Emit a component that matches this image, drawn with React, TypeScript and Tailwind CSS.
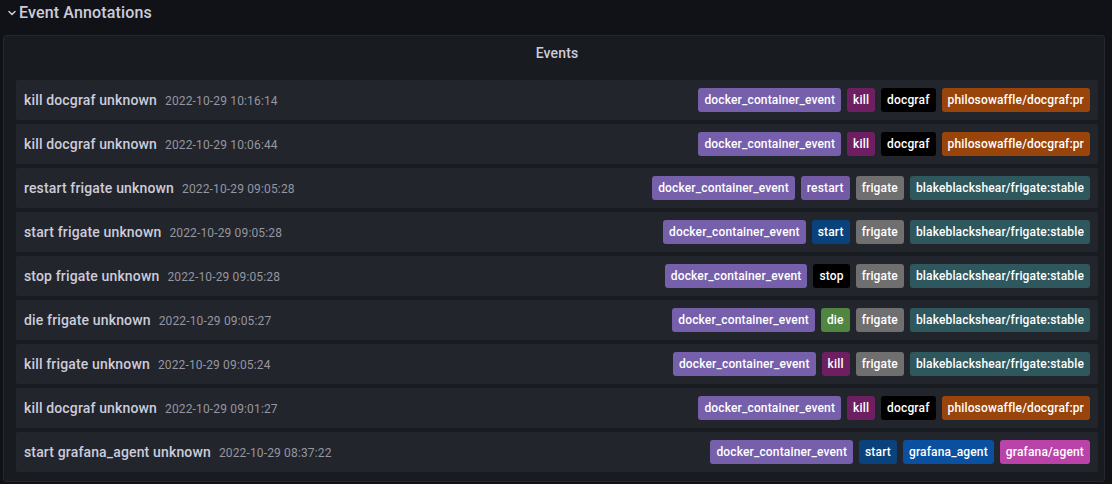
import React from 'react';
import { ChevronDown } from 'lucide-react';

type Ev = { title: string; time: string; tags: [string, string][] };

const docker: [string, string] = ['docker_container_event', 'bg-[#7660ac]'];
const docgraf: [string, string][] = [['docgraf', 'bg-[#000000]'], ['philosowaffle/docgraf:pr', 'bg-[#99440a]']];
const frigate: [string, string][] = [['frigate', 'bg-[#6f6f6f]'], ['blakeblackshear/frigate:stable', 'bg-[#2f575e]']];

const events: Ev[] = [
  { title: 'kill docgraf unknown', time: '2022-10-29 10:16:14', tags: [docker, ['kill', 'bg-[#6d1f62]'], ...docgraf] },
  { title: 'kill docgraf unknown', time: '2022-10-29 10:06:44', tags: [docker, ['kill', 'bg-[#6d1f62]'], ...docgraf] },
  { title: 'restart frigate unknown', time: '2022-10-29 09:05:28', tags: [docker, ['restart', 'bg-[#735aa5]'], ...frigate] },
  { title: 'start frigate unknown', time: '2022-10-29 09:05:28', tags: [docker, ['start', 'bg-[#0a437c]'], ...frigate] },
  { title: 'stop frigate unknown', time: '2022-10-29 09:05:28', tags: [docker, ['stop', 'bg-[#000000]'], ...frigate] },
  { title: 'die frigate unknown', time: '2022-10-29 09:05:27', tags: [docker, ['die', 'bg-[#508642]'], ...frigate] },
  { title: 'kill frigate unknown', time: '2022-10-29 09:05:24', tags: [docker, ['kill', 'bg-[#6d1f62]'], ...frigate] },
  { title: 'kill docgraf unknown', time: '2022-10-29 09:01:27', tags: [docker, ['kill', 'bg-[#6d1f62]'], ...docgraf] },
  {
    title: 'start grafana_agent unknown',
    time: '2022-10-29 08:37:22',
    tags: [docker, ['start', 'bg-[#0a437c]'], ['grafana_agent', 'bg-[#0a50a1]'], ['grafana/agent', 'bg-[#ba43a9]']],
  },
];

const App: React.FC = () => {
  return (
    <div className="w-[1112px] h-[484px] bg-[#111217] text-[#ccccdc] overflow-hidden tracking-[0.15px]" style={{ fontFamily: 'Roboto, "Noto Sans", sans-serif' }}>
      {/* Row header */}
      <div className="flex items-center h-[25px] pl-[6px] pt-[1px]">
        <ChevronDown className="w-[12px] h-[12px] mr-[1px]" strokeWidth={3} />
        <span className="text-base font-medium">Event Annotations</span>
      </div>

      {/* Panel */}
      <div className="mt-[10px] ml-[3px] w-[1102px] h-[447px] bg-[#181b1f] border border-[#25272c] rounded-[3px] flex flex-col">
        <div className="h-[32px] flex items-center justify-center text-sm font-medium pt-[2px] pl-[6px]">Events</div>
        <div className="flex flex-col gap-1 pl-3 pr-[6px] pt-[12px]">
          {events.map((ev, i) => (
            <div key={i} className="h-10 bg-[#22252b] rounded-[2px] flex items-center justify-between px-2">
              <div className="flex items-baseline gap-2 whitespace-nowrap">
                <span className="text-sm font-medium">{ev.title}</span>
                <span className="text-xs text-[#9696a2]">{ev.time}</span>
              </div>
              <div className="flex items-center gap-1.5">
                {ev.tags.map(([label, color], j) => (
                  <span key={j} className={`h-6 px-1.5 rounded-[3px] text-xs font-medium text-white flex items-center ${color}`}>
                    {label}
                  </span>
                ))}
              </div>
            </div>
          ))}
        </div>
      </div>
    </div>
  );
};

export default App;
